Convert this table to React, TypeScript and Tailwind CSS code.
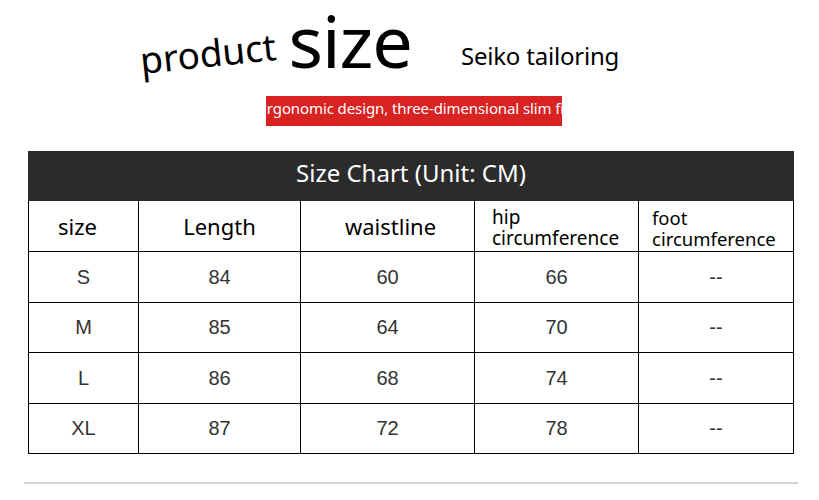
import React from "react";

const rows = [
  { size: "S", length: "84", waist: "60", hip: "66", foot: "--" },
  { size: "M", length: "85", waist: "64", hip: "70", foot: "--" },
  { size: "L", length: "86", waist: "68", hip: "74", foot: "--" },
  { size: "XL", length: "87", waist: "72", hip: "78", foot: "--" },
];

const cols = "grid grid-cols-[110px_162px_174px_164px_155px]";
const cell = "border-r border-b border-black flex items-center";

export default function App() {
  return (
    <div className="w-[819px] h-[500px] bg-white overflow-hidden font-['Noto_Sans',sans-serif] text-black">
      {/* title */}
      <div className="flex items-end h-[80px] pt-[2px]">
        <div className="ml-[142px] mb-[2px] text-[37px] leading-none -rotate-6 origin-bottom-left">product</div>
        <div className="ml-[10px] text-[72px] leading-[1.1] tracking-[-1px]">size</div>
        <div className="ml-[49px] mb-[12px] text-[24px] leading-none tracking-[-0.2px]">Seiko tailoring</div>
      </div>
      <div className="flex mt-[16px] ml-[266px] w-[296px] h-[30px] pb-[5px] bg-[#d92222] overflow-hidden justify-center items-center">
        <span className="whitespace-nowrap text-white text-[15px] leading-none tracking-[-0.1px]">
          Ergonomic design, three-dimensional slim fit
        </span>
      </div>

      {/* table */}
      <div className="ml-[28px] mt-[25px] w-[766px]">
        <div className="h-[50px] pb-[6px] bg-[#2b2b2b] flex items-center justify-center text-white text-[24px]">
          Size Chart (Unit: CM)
        </div>
        <div className={`${cols} border-l border-black h-[51px]`}>
          <div className={`${cell} justify-center pr-[12px] text-[22px]`}>size</div>
          <div className={`${cell} justify-center text-[22px]`}>Length</div>
          <div className={`${cell} justify-center pl-[6px] text-[22px]`}>waistline</div>
          <div className={`${cell} pl-[17px] pt-[4px] text-[19px] leading-[21px]`}>
            <span>
              hip
              <br />
              circumference
            </span>
          </div>
          <div className={`${cell} pl-[13px] pt-[4px] text-[18.5px] leading-[21px]`}>
            <span>
              foot
              <br />
              circumference
            </span>
          </div>
        </div>
        {rows.map((r) => (
          <div
            key={r.size}
            className={`${cols} border-l border-black h-[50.5px] font-['Liberation_Sans',sans-serif] text-[20px] text-[#333]`}
          >
            <div className={`${cell} justify-center`}>{r.size}</div>
            <div className={`${cell} justify-center`}>{r.length}</div>
            <div className={`${cell} justify-center`}>{r.waist}</div>
            <div className={`${cell} justify-center`}>{r.hip}</div>
            <div className={`${cell} justify-center`}>{r.foot}</div>
          </div>
        ))}
      </div>

      <div className="mt-[28px] ml-[24px] w-[774px] h-[2px] bg-[#d4d4d4]" />
    </div>
  );
}
